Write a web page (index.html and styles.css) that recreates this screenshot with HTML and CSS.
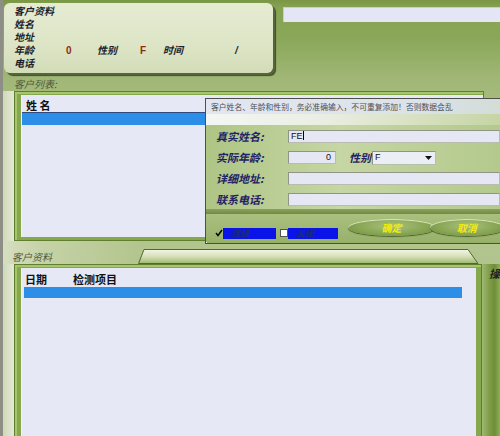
FILE: index.html
```html
<!DOCTYPE html>
<html lang="zh">
<head>
<meta charset="utf-8">
<title>客户资料</title>
<link rel="stylesheet" href="styles.css">
</head>
<body>
<div class="app">
  <div class="top">
    <div class="info">
      <div class="line">客户资料</div>
      <div class="line">姓名</div>
      <div class="line">地址</div>
      <div class="line row4">
        <span class="c1">年龄</span><span class="c2 val">0</span><span class="c3">性别</span><span class="c4 val">F</span><span class="c5">时间</span><span class="c6">/</span>
      </div>
      <div class="line">电话</div>
    </div>
    <div class="topbar"></div>
  </div>

  <div class="caption">客户列表:</div>
  <div class="listrow">
    <div class="gutter"></div>
    <div class="panel upper">
      <div class="listbox">
        <div class="lhead">姓 名</div>
        <div class="lsel"></div>
      </div>
    </div>
  </div>

  <div class="caption2">
    <span class="cap2text">客户资料</span>
    <svg class="tab" width="345" height="16" viewBox="0 0 345 16">
      <defs>
        <linearGradient id="tg" x1="0" y1="0" x2="0" y2="1">
          <stop offset="0" stop-color="#f2f5e6"/>
          <stop offset="0.5" stop-color="#d6e0b8"/>
          <stop offset="1" stop-color="#9fb870"/>
        </linearGradient>
      </defs>
      <path d="M0.5 15.5 L6 1.5 L330 1.5 L340 15.5 Z" fill="url(#tg)" stroke="#4f6a2a" stroke-width="1"/>
    </svg>
  </div>
  <div class="lowerrow">
    <div class="gutter"></div>
    <div class="panel lower">
      <div class="listbox">
        <div class="lhead"><span class="hd1">日期</span><span>检测项目</span></div>
        <div class="lsel2"></div>
      </div>
    </div>
    <div class="rstrip"><span class="op">操</span></div>
  </div>

  <div class="dialog">
    <div class="dtitle">客户姓名、年龄和性别，务必准确输入，不可重复添加！否则数据会乱</div>
    <div class="dstrip"></div>
    <div class="dform">
      <label class="dl">真实姓名:</label>
      <div class="field wide">FE<span class="caret"></span></div>
      <label class="dl">实际年龄:</label>
      <div class="agerow">
        <div class="field age">0</div>
        <span class="dl sex">性别</span>
        <div class="field sel">F<span class="arrow"><svg width="7" height="4" viewBox="0 0 7 4"><path d="M0 0 H7 L3.5 4 Z" fill="#111"/></svg></span></div>
      </div>
      <label class="dl">详细地址:</label>
      <div class="field wide"></div>
      <label class="dl">联系电话:</label>
      <div class="field wide"></div>
    </div>
    <div class="dsep"></div>
    <div class="dbottom">
      <span class="chk checked"><svg width="8" height="8" viewBox="0 0 8 8"><path d="M1 4 L3 6.5 L7 1" fill="none" stroke="#000" stroke-width="1.4"/></svg></span>
      <span class="cbar">连续</span>
      <span class="chk"></span>
      <span class="cbar b2">关闭</span>
      <button class="ell ok">确定</button>
      <button class="ell cancel">取消</button>
    </div>
  </div>
</div>
</body>
</html>
```
FILE: styles.css
```css
html, body {
  margin: 0;
  padding: 0;
}
body {
  width: 500px;
  height: 436px;
  overflow: hidden;
  font-family: "Noto Sans CJK SC", "Liberation Sans", sans-serif;
}
.app {
  position: relative;
  height: 436px;
  box-sizing: border-box;
  border-left: 3px solid #8d8f86;
  background: linear-gradient(180deg, #7a9745 0px, #86a352 8px, #8ba85a 40px, #a1b777 80px, #aec286 140px, #b3c58e 250px, #a6bb80 436px);
  overflow: hidden;
}

/* top area */
.top {
  display: flex;
  height: 76px;
}
.info {
  width: 269px;
  height: 70px;
  margin: 3px 0 0 1px;
  box-sizing: border-box;
  padding: 2px 0 0 10px;
  border-radius: 6px;
  background: linear-gradient(180deg, #e6ebd2 0%, #dde5c6 60%, #d3dcb8 100%);
  box-shadow: 2px 2px 0 #55663a, 3px 3px 1px #3f4d28;
  color: #1d1f2e;
  font-family: "Liberation Sans", "Noto Sans CJK SC", sans-serif;
  font-weight: bold;
  font-style: italic;
  font-size: 10px;
}
.info .line {
  height: 13px;
  line-height: 13px;
  white-space: nowrap;
}
.row4 {
  display: flex;
}
.row4 span { display: block; }
.c1 { width: 52px; }
.c2 { width: 31px; }
.c3 { width: 43px; }
.c4 { width: 23px; }
.c5 { width: 72px; }
.val {
  color: #8c2c10;
  font-style: normal;
  font-family: "Liberation Sans", sans-serif;
}
.topbar {
  flex: 1;
  height: 15px;
  margin: 7px 0 0 10px;
  background: #e4e5f5;
  box-shadow: inset 1px 1px 0 #c9cbd8;
}

/* captions */
.caption {
  height: 15px;
  line-height: 15px;
  padding-left: 11px;
  font-size: 10px;
  font-style: italic;
  color: #4e5a3a;
}
.listrow {
  display: flex;
  height: 150px;
}
.gutter {
  width: 11px;
  background: linear-gradient(90deg, #cfd8b8, #e4e9d6);
}
.panel {
  box-sizing: border-box;
  background: #86a84c;
  border: 1px solid #5f7e30;
  box-shadow: inset 2px 2px 0 #a7c56d;
}
.panel.upper {
  width: 470px;
  padding: 3px 0 3px 6px;
}
.listbox {
  height: 100%;
  background: #e6e8f6;
  border-left: 1px solid #f4f6e8;
  box-sizing: border-box;
  padding-top: 4px;
}
.lhead {
  height: 13px;
  line-height: 13px;
  font-size: 11px;
  font-weight: bold;
  color: #111;
  padding-left: 4px;
  border-bottom: 1px solid #2e4a80;
}
.lsel {
  height: 12px;
  background: #2d8ee8;
}
.caption2 {
  display: flex;
  align-items: flex-end;
  height: 23px;
  box-sizing: border-box;
  padding-top: 9px;
  background: linear-gradient(90deg, #d6dec0 0, #c5d2a6 40px, rgba(180,198,140,0) 140px);
}
.cap2text {
  width: 135px;
  font-size: 10px;
  font-style: italic;
  color: #4e5a3a;
  line-height: 14px;
  padding-left: 9px;
  box-sizing: border-box;
  align-self: center;
}
.tab { display: block; }
.lowerrow {
  display: flex;
  height: 172px;
}
.panel.lower {
  width: 468px;
  padding: 3px 5px 0 6px;
  border-bottom: none;
}
.panel.lower .listbox {
  padding-top: 5px;
}
.panel.lower .lhead {
  border-bottom: none;
  padding-left: 3px;
  height: 12px;
  line-height: 12px;
}
.hd1 { display: inline-block; width: 48px; }
.lsel2 {
  height: 11px;
  margin: 2px 14px 0 2px;
  background: #2d8ee8;
}
.rstrip {
  flex: 1;
  background: linear-gradient(90deg, #9fb874 0, #7f9e46 40%, #6e8e38 70%, #8fae56 100%);
  position: relative;
}
.op {
  display: block;
  padding: 1px 0 0 7px;
  font-size: 11px;
  font-weight: bold;
  font-style: italic;
  color: #222;
}

/* dialog */
.dialog {
  position: absolute;
  left: 202px;
  top: 98px;
  width: 300px;
  height: 146px;
  box-sizing: border-box;
  border: 1px solid #4d4f48;
  box-shadow: inset 1px 1px 0 #f2f2f2;
  background: linear-gradient(180deg, #c7d6a6 0%, #a9c17c 40%, #9db770 70%, #93ad63 100%);
  font-family: "Noto Sans CJK SC", sans-serif;
}
.dtitle {
  height: 15px;
  line-height: 15px;
  padding-left: 5px;
  font-size: 7.8px;
  color: #505050;
  white-space: nowrap;
  background: linear-gradient(90deg, #e2e6f0, #dce2ea 70%, #d3dcd6);
}
.dstrip {
  height: 11px;
  background: linear-gradient(90deg, #f4f6f4 0%, #eaeee2 40%, #c5d4a2 100%);
}
.dform {
  display: grid;
  grid-template-columns: 72px 212px;
  grid-auto-rows: 13px;
  row-gap: 8px;
  padding: 5px 0 0 10px;
  height: 84px;
  box-sizing: border-box;
  align-items: center;
  background: linear-gradient(90deg, #aec585 0%, #c6d6a4 45%, #b3c98c 100%);
}
.dl {
  font-size: 11px;
  font-weight: bold;
  font-style: italic;
  color: #1f2266;
  white-space: nowrap;
  line-height: 13px;
}
.field {
  height: 13px;
  box-sizing: border-box;
  background: #e6e7f4;
  border: 1px solid #b9bdae;
  border-top-color: #8f9484;
  border-left-color: #8f9484;
  font-family: "Liberation Sans", sans-serif;
  font-size: 9px;
  line-height: 11px;
  padding-left: 2px;
  color: #111;
}
.caret {
  display: inline-block;
  width: 1px;
  height: 9px;
  background: #000;
  vertical-align: -1px;
}
.agerow {
  display: flex;
  align-items: center;
  height: 14px;
}
.field.age {
  width: 48px;
  text-align: right;
  padding-right: 4px;
}
.sex {
  margin-left: 13px;
  width: 23px;
}
.field.sel {
  width: 64px;
  height: 14px;
  position: relative;
  background: #eceef6;
}
.arrow {
  position: absolute;
  right: 2px;
  top: 1px;
  width: 9px;
  height: 10px;
  display: flex;
  align-items: center;
  justify-content: center;
}
.dsep {
  height: 5px;
  background: linear-gradient(180deg, #8aa35c, #6f8a42);
}
.dbottom {
  display: flex;
  align-items: center;
  height: 28px;
  padding-left: 9px;
  background: linear-gradient(180deg, #a9c07e 0%, #98b16b 100%);
}
.chk {
  width: 8px;
  height: 8px;
  box-sizing: border-box;
  background: #fff;
  border: 1px solid #555;
  margin-top: 10px;
  display: flex;
  align-items: center;
  justify-content: center;
}
.chk.checked {
  border: none;
  background: transparent;
}
.cbar {
  width: 55px;
  height: 11px;
  margin: 10px 4px 0 0;
  background: #0a14e8;
  color: #1a2a7a;
  font-size: 9px;
  font-weight: bold;
  font-style: italic;
  line-height: 11px;
  padding-left: 8px;
  box-sizing: border-box;
}
.cbar.b2 { width: 52px; }
.ell {
  border: none;
  padding: 0;
  margin: 0;
  height: 17px;
  border-radius: 50%;
  background: radial-gradient(ellipse at 50% 40%, #a9c27a 0%, #88a656 55%, #6d8a3e 100%);
  box-shadow: inset 0 1px 0 #d8e6b8, 0 1px 1px #4c6428;
  color: #f2ea12;
  font-family: "Noto Sans CJK SC", sans-serif;
  font-size: 10px;
  font-weight: bold;
  font-style: italic;
  line-height: 17px;
  margin-bottom: 1px;
}
.ell.ok {
  width: 92px;
  margin-left: 6px;
}
.ell.cancel {
  width: 78px;
  margin-left: -6px;
}
```
